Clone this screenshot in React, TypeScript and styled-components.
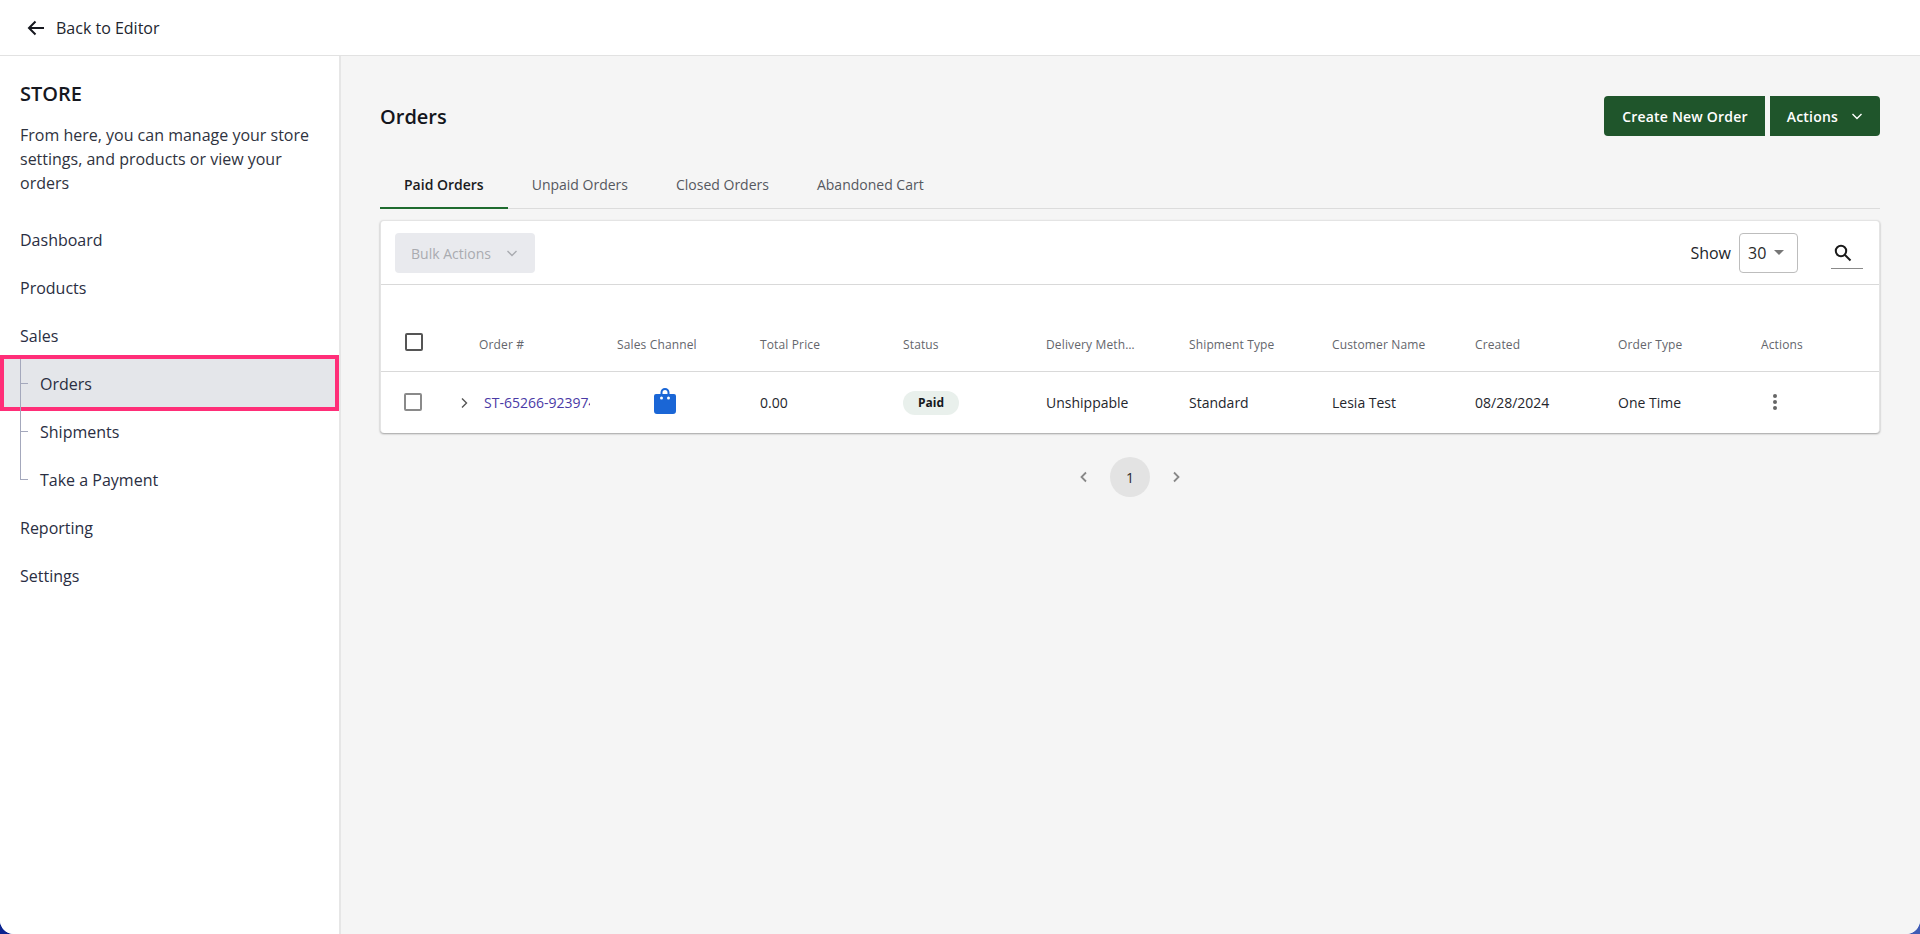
import React from "react";
import styled, { createGlobalStyle } from "styled-components";

const Global = createGlobalStyle`
  html, body { margin: 0; padding: 0; height: 100%; overflow: hidden; }
  body {
    background: linear-gradient(90deg, #0b2490 0%, #3f5bb5 100%);
    font-family: "Open Sans", "Liberation Sans", sans-serif;
    color: #22263a;
  }
  * { box-sizing: border-box; }
`;

const Page = styled.div`
  width: 1920px;
  height: 934px;
  display: flex;
  flex-direction: column;
  background: #fff;
  border-radius: 0 0 14px 14px;
  overflow: hidden;
`;
const TopBar = styled.header`
  height: 56px;
  flex: none;
  display: flex;
  align-items: center;
  gap: 11px;
  padding-left: 27px;
  background: #fff;
  border-bottom: 1px solid #e2e2e2;
`;
const BackLabel = styled.span`
  font-size: 16px;
  color: #22252e;
`;
const Body = styled.div`
  flex: 1;
  display: flex;
  min-height: 0;
`;
const Sidebar = styled.aside`
  width: 341px;
  flex: none;
  background: #fff;
  border-right: 2px solid #e6e6e6;
  padding-top: 26px;
`;
const StoreTitle = styled.h2`
  margin: 0;
  padding: 0 20px;
  font-size: 20px;
  line-height: 24px;
  font-weight: 600;
  color: #16181f;
`;
const Description = styled.p`
  margin: 17px 0 20px;
  padding: 0 16px 0 20px;
  font-size: 16px;
  line-height: 24px;
  color: #2f3340;
`;
const NavItem = styled.div`
  height: 48px;
  display: flex;
  align-items: center;
  padding: 2px 0 0 20px;
  font-size: 16px;
  color: #2a2e42;
`;
const SubItem = styled.div<{ $active?: boolean; $last?: boolean }>`
  position: relative;
  height: 48px;
  display: flex;
  align-items: center;
  padding: 2px 0 0 40px;
  font-size: 16px;
  color: #2a2e42;
  background: ${(p) => (p.$active ? "#e4e6ea" : "transparent")};
  width: ${(p) => (p.$active ? "339px" : "auto")};
  &::before {
    content: "";
    position: absolute;
    left: 20px;
    top: ${(p) => (p.$active ? "-4px" : "0")};
    height: ${(p) => (p.$last ? "24px" : p.$active ? "52px" : "48px")};
    width: 1px;
    background: #a4a8bc;
  }
  i {
    position: absolute;
    left: 20px;
    top: 24px;
    width: 8px;
    height: 1px;
    background: #a4a8bc;
  }
  ${(p) =>
    p.$active
      ? `&::after {
    content: "";
    position: absolute;
    inset: -4px 0;
    border: 4px solid #ff2e78;
  }`
      : ""}
`;
const Main = styled.main`
  flex: 1;
  background: #f5f5f5;
  padding: 40px 40px 0 39px;
  min-width: 0;
`;
const TitleRow = styled.div`
  height: 40px;
  display: flex;
  align-items: center;
  justify-content: space-between;
`;
const PageTitle = styled.h1`
  margin: 0;
  font-size: 20px;
  font-weight: 600;
  color: #14161c;
`;
const ButtonGroup = styled.div`
  display: flex;
  gap: 5px;
`;
const GreenButton = styled.button<{ $side: "left" | "right" }>`
  height: 40px;
  display: flex;
  align-items: center;
  gap: 13px;
  padding: 0 17px 0 ${(p) => (p.$side === "left" ? "18px" : "17px")};
  border: 0;
  background: #1f552b;
  color: #fff;
  font: 600 14px "Open Sans", sans-serif;
  letter-spacing: 0.2px;
  border-radius: ${(p) => (p.$side === "left" ? "4px 0 0 4px" : "0 4px 4px 0")};
`;
const Tabs = styled.nav`
  margin-top: 24px;
  height: 49px;
  display: flex;
  border-bottom: 1px solid #dcdcdc;
`;
const Tab = styled.div<{ $active?: boolean }>`
  height: 49px;
  display: flex;
  align-items: center;
  padding: 2px 24px 0;
  font-size: 14px;
  font-weight: ${(p) => (p.$active ? 600 : 400)};
  color: ${(p) => (p.$active ? "#1a1c22" : "#55585f")};
  border-bottom: 2px solid ${(p) => (p.$active ? "#1e6b2e" : "transparent")};
`;
const Card = styled.section`
  margin-top: 11px;
  background: #fff;
  border: 1px solid #e4e4e4;
  border-bottom: 0;
  border-radius: 4px;
  box-shadow: 0 1px 2px rgba(0, 0, 0, 0.35);
`;
const Toolbar = styled.div`
  height: 64px;
  display: flex;
  align-items: center;
  padding: 0 16px 0 14px;
  border-bottom: 1px solid #d9d9d9;
`;
const BulkButton = styled.div`
  width: 140px;
  height: 40px;
  display: flex;
  align-items: center;
  gap: 15px;
  padding: 1px 0 0 16px;
  border-radius: 4px;
  background: #e9eaee;
  color: #a9abb0;
  font-size: 14px;
`;
const ToolbarRight = styled.div`
  margin-left: auto;
  display: flex;
  align-items: center;
`;
const ShowLabel = styled.span`
  font-size: 16px;
  color: #22252b;
  margin-right: 8px;
`;
const Select = styled.div`
  width: 59px;
  height: 40px;
  display: flex;
  align-items: center;
  gap: 8px;
  padding-left: 8px;
  border: 1px solid #bdbdbd;
  border-radius: 4px;
  font-size: 16px;
  color: #2a2a2a;
`;
const Caret = styled.span`
  width: 0;
  height: 0;
  border-left: 5px solid transparent;
  border-right: 5px solid transparent;
  border-top: 5px solid #777;
`;
const SearchBox = styled.div`
  margin-left: 33px;
  width: 32px;
  height: 34px;
  padding: 8px 0 0 2px;
  border-bottom: 1px solid #8a8a8a;
  margin-top: -2px;
`;
const Row = styled.div<{ $head?: boolean }>`
  display: grid;
  grid-template-columns: 80px 144px repeat(8, 143px) 131px;
  align-items: center;
  height: ${(p) => (p.$head ? "87px" : "61px")};
  padding-top: ${(p) => (p.$head ? "33px" : "0")};
  border-bottom: ${(p) => (p.$head ? "1px solid #d9d9d9" : "0")};
`;
const HeadCell = styled.div<{ $clip?: boolean; $first?: boolean }>`
  padding-left: ${(p) => (p.$first ? "18px" : "12px")};
  font-size: 12px;
  font-weight: 500;
  letter-spacing: 0.14px;
  color: #64666c;
  white-space: nowrap;
  ${(p) =>
    p.$clip
      ? `overflow: hidden; text-overflow: ellipsis; max-width: 102px;`
      : ""}
`;
const Cell = styled.div`
  padding-left: 12px;
  font-size: 14px;
  color: #24262c;
  white-space: nowrap;
`;
const CheckCell = styled.div`
  padding-left: 24px;
  display: flex;
`;
const CheckBox = styled.span<{ $head?: boolean }>`
  width: 18px;
  height: 18px;
  border: 2px solid ${(p) => (p.$head ? "#555" : "#8a8a8a")};
  border-radius: 2px;
  display: block;
  margin: ${(p) => (p.$head ? "-6px 0 0" : "-1px 0 0 -1px")};
`;
const OrderCell = styled.div`
  display: flex;
  align-items: center;
  gap: 14px;
  margin-left: -3px;
  min-width: 0;
`;
const OrderLink = styled.a`
  display: block;
  width: 106px;
  overflow: hidden;
  white-space: nowrap;
  font-size: 14px;
  color: #4a3aa6;
`;
const BagCell = styled.div`
  padding-left: 49px;
  margin-top: -4px;
  display: flex;
`;
const Pill = styled.span`
  display: inline-flex;
  align-items: center;
  justify-content: center;
  width: 56px;
  height: 24px;
  border-radius: 12px;
  background: #e9f0ec;
  font-size: 12px;
  font-weight: 700;
  color: #16181c;
`;
const KebabCell = styled.div`
  padding-left: 23px;
  display: flex;
  margin-top: -1px;
`;
const Pager = styled.div`
  margin-top: 24px;
  display: flex;
  align-items: center;
  justify-content: center;
  gap: 20px;
`;
const PageNumber = styled.span`
  width: 40px;
  height: 40px;
  border-radius: 50%;
  background: #e3e3e3;
  display: flex;
  align-items: center;
  justify-content: center;
  font-size: 14px;
  color: #2a2a2a;
`;
const Icon = styled.svg`
  display: block;
  flex: none;
`;

const Chevron = ({ dir, color, width = 1.4 }: { dir: "down" | "left" | "right"; color: string; width?: number }) => {
  const d = dir === "down" ? "M1.5 4l4.5 4.5L10.5 4" : dir === "right" ? "M4 1.5L8.5 6 4 10.5" : "M8 1.5L3.5 6 8 10.5";
  return (
    <Icon width="12" height="12" viewBox="0 0 12 12" fill="none" stroke={color} strokeWidth={width}>
      <path d={d} />
    </Icon>
  );
};

const heads = ["Sales Channel", "Total Price", "Status", "Delivery Method", "Shipment Type", "Customer Name", "Created", "Order Type", "Actions"];

export default function App() {
  return (
    <Page>
      <Global />
      <TopBar>
        <Icon width="18" height="16" viewBox="0 0 18 16" fill="none" stroke="#16181f" strokeWidth="2">
          <path d="M17 8H2M8.5 1.5L2 8l6.5 6.5" />
        </Icon>
        <BackLabel>Back to Editor</BackLabel>
      </TopBar>
      <Body>
        <Sidebar>
          <StoreTitle>STORE</StoreTitle>
          <Description>From here, you can manage your store settings, and products or view your orders</Description>
          <NavItem>Dashboard</NavItem>
          <NavItem>Products</NavItem>
          <NavItem>Sales</NavItem>
          <SubItem $active><i />Orders</SubItem>
          <SubItem><i />Shipments</SubItem>
          <SubItem $last><i />Take a Payment</SubItem>
          <NavItem>Reporting</NavItem>
          <NavItem>Settings</NavItem>
        </Sidebar>
        <Main>
          <TitleRow>
            <PageTitle>Orders</PageTitle>
            <ButtonGroup>
              <GreenButton $side="left">Create New Order</GreenButton>
              <GreenButton $side="right">
                Actions
                <Chevron dir="down" color="#fff" />
              </GreenButton>
            </ButtonGroup>
          </TitleRow>
          <Tabs>
            <Tab $active>Paid Orders</Tab>
            <Tab>Unpaid Orders</Tab>
            <Tab>Closed Orders</Tab>
            <Tab>Abandoned Cart</Tab>
          </Tabs>
          <Card>
            <Toolbar>
              <BulkButton>
                Bulk Actions
                <Chevron dir="down" color="#a9abb0" />
              </BulkButton>
              <ToolbarRight>
                <ShowLabel>Show</ShowLabel>
                <Select>
                  30
                  <Caret />
                </Select>
                <SearchBox>
                  <Icon width="20" height="20" viewBox="0 0 20 20" fill="none" stroke="#1a1a1a" strokeWidth="2">
                    <circle cx="8" cy="8" r="5.2" />
                    <path d="M12 12l5.5 5.5" />
                  </Icon>
                </SearchBox>
              </ToolbarRight>
            </Toolbar>
            <Row $head>
              <CheckCell>
                <CheckBox $head />
              </CheckCell>
              <HeadCell $first>Order #</HeadCell>
              {heads.map((h) => (
                <HeadCell key={h} $clip={h === "Delivery Method"}>
                  {h}
                </HeadCell>
              ))}
            </Row>
            <Row>
              <CheckCell>
                <CheckBox />
              </CheckCell>
              <OrderCell>
                <Chevron dir="right" color="#555" />
                <OrderLink>ST-65266-923974-1</OrderLink>
              </OrderCell>
              <BagCell>
                <Icon width="22" height="27" viewBox="0 0 22 27">
                  <path
                    fill="#1a66d6"
                    d="M6.5 7V5.5a4.5 4.5 0 0 1 9 0V7h4.5a2 2 0 0 1 2 2v15a3 3 0 0 1-3 3H3a3 3 0 0 1-3-3V9a2 2 0 0 1 2-2h4.5zm2 0h5V5.5a2.5 2.5 0 0 0-5 0V7z"
                  />
                  <circle cx="7.5" cy="11" r="1.5" fill="#fff" />
                  <circle cx="14.5" cy="11" r="1.5" fill="#fff" />
                </Icon>
              </BagCell>
              <Cell>0.00</Cell>
              <Cell>
                <Pill>Paid</Pill>
              </Cell>
              <Cell>Unshippable</Cell>
              <Cell>Standard</Cell>
              <Cell>Lesia Test</Cell>
              <Cell>08/28/2024</Cell>
              <Cell>One Time</Cell>
              <KebabCell>
                <Icon width="6" height="18" viewBox="0 0 6 18" fill="#666">
                  <circle cx="3" cy="3" r="2" />
                  <circle cx="3" cy="9" r="2" />
                  <circle cx="3" cy="15" r="2" />
                </Icon>
              </KebabCell>
            </Row>
          </Card>
          <Pager>
            <Chevron dir="left" color="#888" width={1.8} />
            <PageNumber>1</PageNumber>
            <Chevron dir="right" color="#888" width={1.8} />
          </Pager>
        </Main>
      </Body>
    </Page>
  );
}
